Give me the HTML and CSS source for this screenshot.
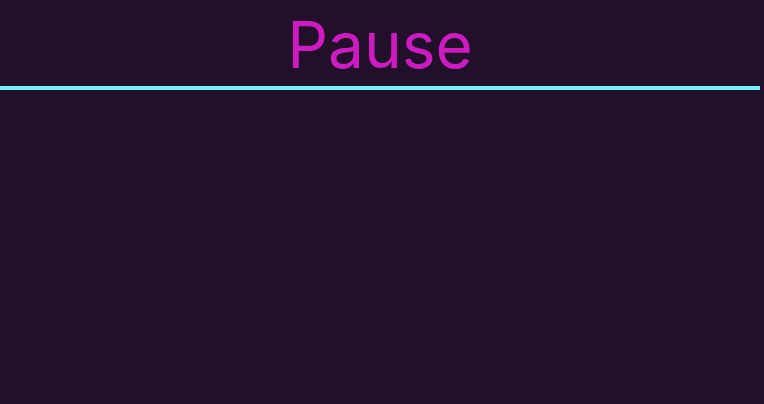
FILE: index.html
```html
<!DOCTYPE html>
<html lang="en">
<head>
<meta charset="utf-8">
<title>Pause</title>
<link rel="stylesheet" href="styles.css">
</head>
<body>
<div class="screen">
  <header class="title-bar">
    <h1 class="title">Pause</h1>
  </header>
</div>
</body>
</html>
```
FILE: styles.css
```css
html, body {
  margin: 0;
  padding: 0;
  background: #220f2a;
  height: 100%;
}
.screen {
  width: 760px;
  font-family: Inter, "Noto Sans", sans-serif;
}
.title-bar {
  padding-top: 6px;
  padding-bottom: 2px;
  border-bottom: 4px solid #70f3fb;
}
.title {
  margin: 0;
  font-size: 64px;
  font-weight: 400;
  line-height: 78px;
  text-align: center;
  color: #cb1bc1;
}
```
